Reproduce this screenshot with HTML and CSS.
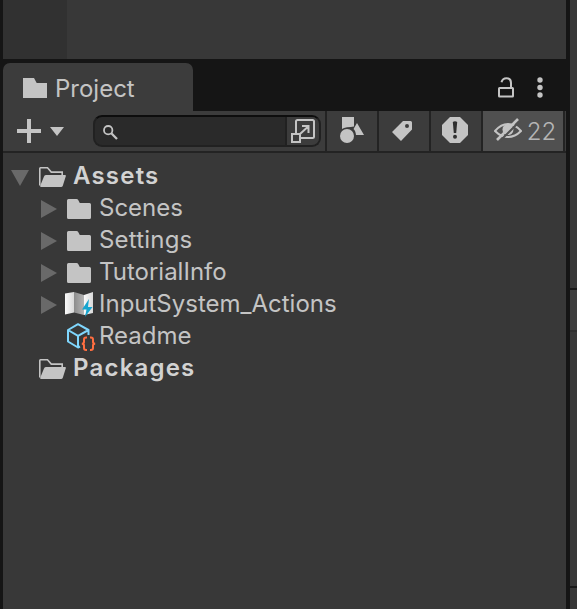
FILE: index.html
```
<!DOCTYPE html>
<html lang="en">
<head>
<meta charset="utf-8">
<title>Project</title>
<link rel="stylesheet" href="styles.css">
</head>
<body>
<svg class="defs" width="0" height="0">
  <defs>
    <linearGradient id="fold" x1="0" y1="0" x2="1" y2="0"><stop offset="0" stop-color="#fafafa"/><stop offset="1" stop-color="#d8d8d8"/></linearGradient>
    <linearGradient id="shade" x1="0" y1="0" x2="1" y2="0"><stop offset="0" stop-color="#8c8c8c"/><stop offset="1" stop-color="#b4b4b4"/></linearGradient>
    <symbol id="folder" viewBox="0 0 24 20"><path d="M1.500 0H9.500Q10.700 0 11.200 1L12.800 4H22.500Q24 4 24 5.500V18.500Q24 20 22.500 20H1.500Q0 20 0 18.500V1.500Q0 0 1.500 0Z"/></symbol>
    <symbol id="open" viewBox="0 0 27 20"><path d="M.8 18.500V1.500Q.8.800 1.500.800H8.500L12.300 5.100H23.200V8" fill="none" stroke="#c4c4c4" stroke-width="1.600"/><path d="M7.300 8H26Q27.200 8 26.800 9.200L23.800 18.700Q23.400 20 22 20H2Q.8 20 1.300 18.600L5 9.400Q5.600 8 7.300 8Z"/></symbol>
    <symbol id="right" viewBox="0 0 16 18"><path d="M0 0L16 9L0 18Z"/></symbol>
  </defs>
</svg>
<div class="window">
  <main class="left">
    <div class="upper"><div class="gutter"></div></div>
    <header class="tabs">
      <div class="tab"><svg class="tabicon" width="24" height="20" viewBox="0 0 24 20"><path d="M0 0H11L13.700 5H24V20H0Z"/></svg><span>Project</span></div>
      <div class="tools">
        <svg class="line" width="16" height="21" viewBox="0 0 16 21"><rect x="1" y="11" width="14" height="8.500" rx=".5"/><path d="M3.500 5.200Q4.500 1.200 8.500 1.200Q13 1.200 13 6V11"/></svg>
        <svg width="6" height="21" viewBox="0 0 6 21"><circle cx="3" cy="3" r="2.700"/><circle cx="3" cy="10.500" r="2.700"/><circle cx="3" cy="18" r="2.700"/></svg>
      </div>
    </header>
    <nav class="toolbar">
      <svg class="add" width="47" height="24" viewBox="0 0 47 24"><path d="M10 0H14V10H24V14H14V24H10V14H0V10H10ZM33 8H47L40 17Z"/></svg>
      <div class="search">
        <div class="field"><svg class="line" width="15" height="15" viewBox="0 0 15 15"><circle cx="5.200" cy="5.200" r="4.200" stroke-width="1.800"/><path d="M8.300 8.300L14 14" stroke-width="2.300"/></svg></div>
        <div class="pop"><svg class="line" width="24" height="24" viewBox="0 0 24 24"><path d="M5 14V2.500Q5 1 6.500 1H21.500Q23 1 23 2.500V17.500Q23 19 21.500 19H10M1 15H9V23H1ZM9 15L17.200 7.500M11 7H17.500V14"/></svg></div>
      </div>
      <div class="btn shapes"><svg width="24" height="26" viewBox="0 0 24 26"><path d="M2 0H14V9.500Q11 10.300 7 10.300Q3.500 10.700 2 12ZM17 6L24 18H16Q15.500 13.500 13.500 12Z"/><circle cx="7" cy="19" r="7"/></svg></div>
      <div class="btn tag"><svg width="20" height="20" viewBox="0 0 20 20"><path fill-rule="evenodd" d="M11 0H18.500Q20 0 20 1.500V8.500L9 20L0 11ZM15 3A2 2 0 1 0 15 7A2 2 0 1 0 15 3Z"/></svg></div>
      <div class="btn alert"><svg width="26" height="26" viewBox="0 0 26 26"><path d="M8 0H18L26 8V18L18 26H8L0 18V8Z"/><path fill="#303030" d="M10.800 5Q13 3.500 15.200 5L14.200 16H11.800Z"/><circle fill="#303030" cx="13" cy="19.800" r="2"/></svg></div>
      <div class="btn hidden"><svg width="28" height="24" viewBox="0 0 28 24"><path d="M1 13Q7 6 14 6T27 13Q21 19 14 19T1 13Z" fill="none" stroke="#c4c4c4" stroke-width="2"/><circle cx="14" cy="11.500" r="5.500"/><path d="M5.500 23.500L26 3" stroke="#505050" stroke-width="2"/><path d="M3 22L24 1" stroke="#c4c4c4" stroke-width="2.600"/></svg><span>22</span></div>
    </nav>
    <section class="tree">
      <div class="row root"><svg class="down" width="18" height="16" viewBox="0 0 18 16"><path d="M0 0H18L9 16Z"/></svg><svg class="openfolder" width="27" height="20"><use href="#open"/></svg><b>Assets</b></div>
      <div class="row"><svg class="arrow" width="16" height="18"><use href="#right"/></svg><svg class="folder" width="24" height="20"><use href="#folder"/></svg><span>Scenes</span></div>
      <div class="row"><svg class="arrow" width="16" height="18"><use href="#right"/></svg><svg class="folder" width="24" height="20"><use href="#folder"/></svg><span class="settings">Settings</span></div>
      <div class="row"><svg class="arrow" width="16" height="18"><use href="#right"/></svg><svg class="folder" width="24" height="20"><use href="#folder"/></svg><span>TutorialInfo</span></div>
      <div class="row"><svg class="arrow" width="16" height="18"><use href="#right"/></svg><svg class="asset" width="30" height="26" viewBox="0 0 30 26"><path fill="url(#fold)" d="M0 1.500L9 0V20.500L0 22.500Z"/><path fill="url(#shade)" d="M9 0L19 3V23L9 20.500Z"/><path fill="url(#fold)" d="M19 3L28 0V21L19 23Z"/><path fill="#16a5cf" d="M24 7L17 17.500H21.500L20 25L27.500 15H23Z"/></svg><span>InputSystem_Actions</span></div>
      <div class="row leaf"><svg class="cube line" width="30" height="28" viewBox="0 0 30 28"><path stroke="#7fd6fd" stroke-linejoin="round" d="M13 23.500L11 24.500L1 18.500V7L11 1.200L21.500 7V12M1 7L11 12.800L21.500 7M11 12.800V24.500"/><path stroke="#ff6e40" d="M20 14.500H19Q17 14.500 17 16.500V19Q17 20.800 14.800 20.800Q17 20.800 17 22.600V25Q17 27 19 27H20M23 14.500H24Q26 14.500 26 16.500V19Q26 20.800 28.200 20.800Q26 20.800 26 22.600V25Q26 27 24 27H23"/></svg><span>Readme</span></div>
      <div class="row root closed"><svg class="openfolder" width="27" height="20"><use href="#open"/></svg><b>Packages</b></div>
    </section>
  </main>
  <aside class="right"><div class="r1"></div><div class="r2"></div><div class="r3"></div><div class="r4"></div></aside>
</div>
</body>
</html>
```
FILE: styles.css
```
* { box-sizing: border-box; }
body { margin: 0; background: #151515; color: #c4c4c4; font: 24px/32px Inter, sans-serif; overflow: hidden; }
svg { display: block; flex: none; fill: #c4c4c4; }
svg.line { fill: none; stroke: #c4c4c4; stroke-width: 2; }
.defs { position: absolute; }
.window { display: flex; width: 577px; height: 609px; padding-left: 3px; gap: 4px; }
.left { width: 563px; display: flex; flex-direction: column; }
.upper { height: 59px; background: #383838; }
.gutter { width: 64px; height: 59px; background: #313131; }
.tabs { height: 52px; display: flex; justify-content: space-between; padding-top: 4px; }
.tab { width: 190px; height: 48px; background: #3c3c3c; border-radius: 7px 7px 0 0; display: flex; align-items: center; padding: 2px 0 0 20px; gap: 8px; }
.tab span, .hidden span { padding-top: 1px; }
.tools { display: flex; gap: 23px; padding: 14px 23px 0 0; }
.toolbar { height: 42px; background: #3c3c3c; border-bottom: 2px solid #232323; display: flex; padding-right: 1px; }
.add { margin: 8px 29px 0 14px; }
.search { width: 228px; height: 32px; margin: 4px 4px 0 0; display: flex; border: 2px solid #212121; border-top-color: #0d0d0d; border-radius: 9px; overflow: hidden; background: #2a2a2a; }
.field { width: 192px; padding: 8px; border-right: 2px solid #212121; }
.pop { flex: 1; background: #3c3c3c; padding: 2px 0 0 4px; }
.btn { width: 52px; height: 40px; border-left: 2px solid #232323; display: flex; align-items: center; justify-content: center; padding-right: 2px; }
.shapes { padding: 0 0 2px; }
.tag { padding-right: 4px; }
.alert { padding-bottom: 2px; }
.hidden { width: 84px; background: #505050; border-right: 2px solid #232323; padding: 0 0 0 4px; gap: 5px; color: #b5b5b5; }
.hidden svg { margin-bottom: 2px; }
.hidden span { font-weight: 300; }
.tree { flex: 1; background: #383838; padding-top: 7px; }
.row { height: 32px; display: flex; align-items: center; padding-left: 38px; }
.root { padding-left: 8px; }
.closed { padding-left: 36px; }
.leaf { padding-left: 64px; }
.down { fill: #696969; margin: 3px 10px 0 0; }
.arrow { fill: #696969; margin: 1px 10px 0 0; }
.openfolder { margin: 2px 7px 0 0; }
.folder { margin: 2px 8px 0 0; }
.asset { margin: 1px 4px 0 -2px; }
.cube { margin: 1px 2px 0 0; }
.settings { letter-spacing: .2px; }
b { font-weight: 600; color: #d2d2d2; letter-spacing: 1.2px; }
.right { width: 7px; display: flex; flex-direction: column; }
.r1 { height: 290px; background: #383838; border-bottom: 2px solid #191919; }
.r2 { height: 42px; background: #3e3e3e; border-bottom: 2px solid #303030; }
.r3 { height: 256px; background: #383838; border-bottom: 2px solid #191919; }
.r4 { flex: 1; background: #383838; }
```
